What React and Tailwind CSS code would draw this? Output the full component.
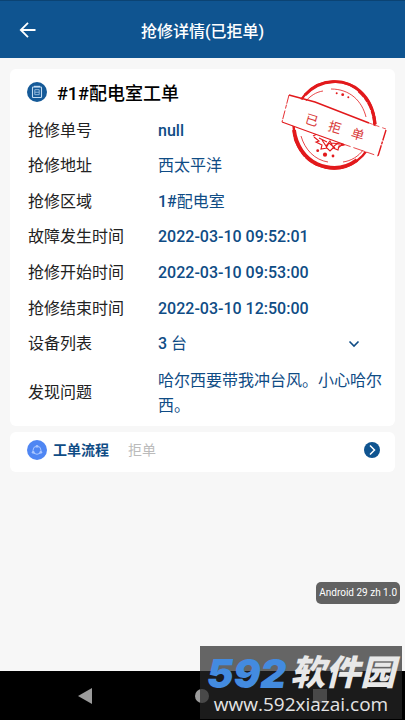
import React from "react";

const details = [
  { label: "抢修单号", value: "null" },
  { label: "抢修地址", unit: "西太平洋" },
  { label: "抢修区域", value: "1#", unit: "配电室" },
  { label: "故障发生时间", value: "2022-03-10 09:52:01" },
  { label: "抢修开始时间", value: "2022-03-10 09:53:00" },
  { label: "抢修结束时间", value: "2022-03-10 12:50:00" },
];

function Header() {
  return (
    <header className="grid h-[58px] grid-cols-[56px_1fr_56px] items-center border-t border-[#0b4373] bg-[#0f5490] text-white">
      <button type="button" aria-label="返回" className="flex h-full items-center pl-[19px]">
        <svg width="18" height="18" viewBox="0 0 18 18" fill="none" stroke="currentColor" strokeWidth="1.8">
          <path d="M16.5 9H2M9 1.8 1.8 9 9 16.2" />
        </svg>
      </button>
      <h1 className="pt-1 text-center text-base font-medium">抢修详情(已拒单)</h1>
    </header>
  );
}

function OrderIcon() {
  return (
    <svg width="20" height="20" viewBox="0 0 20 20" fill="none" className="shrink-0">
      <circle cx="10" cy="10" r="10" fill="#155a98" />
      <rect x="5.5" y="5" width="9" height="10.5" rx="0.8" stroke="#c4dcf2" strokeWidth="1.1" />
      <path d="M7 4.5h6" stroke="#c4dcf2" strokeWidth="1.4" />
      <path d="M7.8 7.7h4.4v5H7.8zM7.8 10.2h4.4" stroke="#9fc3e4" strokeWidth="0.9" />
    </svg>
  );
}

function FlowIcon() {
  return (
    <svg width="20" height="20" viewBox="0 0 20 20" fill="none" className="shrink-0">
      <circle cx="10" cy="10" r="10" fill="#4f86f3" />
      <circle cx="10" cy="10.3" r="4" stroke="#a9c6ff" strokeWidth="1" />
      <circle cx="10" cy="6.3" r="1.4" fill="#a9c6ff" />
      <circle cx="6.2" cy="12.3" r="1.4" fill="#a9c6ff" />
      <circle cx="13.8" cy="12.3" r="1.4" fill="#a9c6ff" />
    </svg>
  );
}

function Stamp() {
  return (
    <svg
      width="106"
      height="94"
      viewBox="0 0 106 94"
      fill="none"
      stroke="#e2191c"
      className="absolute top-[9px] right-2"
    >
      <ellipse cx="53" cy="47" rx="40.5" ry="43.5" strokeWidth="2.4" />
      <path d="M24 17C40 0 64 0 79 13c9 8 14 19 15 33" strokeWidth="2.8" />
      <path d="M78 13c9 8 15 19 16 34" strokeWidth="3.2" strokeDasharray="8 1 5 1" />
      <path d="M13 52c2 16 11 28 23 34 14 6 28 5 40-4" strokeWidth="3.8" />
      <path d="M14 60c5 14 12 22 23 27" strokeWidth="3" strokeDasharray="5 1 9 1" />
      <path d="M24 24c5-6 11-10 18-11M50 11c19 0 31 12 35 28M20 58c4 14 14 24 27 26M62 84c8-1 16-6 20-12" strokeWidth="0.8" />
      <g fill="#e2191c" stroke="none">
        <circle cx="55.7" cy="15.3" r="1" />
        <circle cx="61.7" cy="16.7" r="1.4" />
        <circle cx="67.3" cy="19.3" r="1" />
        <circle cx="36.7" cy="72.7" r="1.4" />
        <circle cx="44" cy="76.7" r="2.1" />
        <circle cx="52" cy="78" r="1.4" />
      </g>
      <path
        d="M33 59l5 4-3 1 6 3-1 4 6-1 3 3 3-3 5 2 1-4 5-1-1-2M32 58l4-2M41 62l4 6 4-5 3 6 5-4M45 70l3-5 6 5M38 60l8 4M50 65l11 1M57 70l6-5"
        strokeWidth="1.1"
      />
      <path d="M8 17 105 52 97 78 1 44z" fill="#fff" stroke="none" />
      <path d="M8 17 34 24 88 45" strokeWidth="1.5" />
      <path d="M88 45 105 51" strokeWidth="0.7" strokeDasharray="4 3" />
      <path d="M105 52 97 78" strokeWidth="1.4" strokeDasharray="11 1 3 1" />
      <path d="M8 17 1 44" strokeWidth="0.9" strokeDasharray="9 1 4 2" />
      <path d="M1 44 34 56 62 66" strokeWidth="1.2" />
      <path d="M62 66 97 78" strokeWidth="0.8" strokeDasharray="8 3 12 2" />
      <g
        transform="rotate(17 54 49)"
        fill="#d93a3a"
        stroke="none"
        fontSize="13"
        textAnchor="middle"
        className="font-['Noto_Sans_CJK_SC',sans-serif]"
      >
        <text x="30" y="54">已</text>
        <text x="54" y="54">拒</text>
        <text x="78" y="54">单</text>
      </g>
    </svg>
  );
}

function DetailCard() {
  return (
    <section className="relative rounded-md bg-white pt-2 pr-3 pb-2 pl-[17px]">
      <Stamp />
      <div className="flex h-9 items-center gap-2.5 pb-1.5">
        <OrderIcon />
        <h2 className="pt-1 text-lg leading-6 font-medium text-black">#1#配电室工单</h2>
      </div>
      <dl className="grid pl-px text-base">
        <div className="grid h-[249px] auto-rows-fr">
          {details.map(({ label, value, unit }) => (
            <div key={label} className="grid grid-cols-[130px_1fr] items-center">
              <dt className="text-[#222]">{label}</dt>
              <dd className="text-[#0f4c85]">
                {value && <span className="font-medium">{value}</span>}
                {unit}
              </dd>
            </div>
          ))}
          <div className="grid grid-cols-[130px_1fr] items-center">
            <dt className="text-[#222]">设备列表</dt>
            <dd className="text-[#0f4c85]">
              <button type="button" className="flex w-full items-center justify-between pr-[23px]">
                <span>
                  <span className="font-medium">3</span> 台
                </span>
                <svg width="12" height="12" viewBox="0 0 12 12" fill="none" stroke="currentColor" strokeWidth="1.6">
                  <path d="M1.5 3.5 6 8l4.5-4.5" />
                </svg>
              </button>
            </dd>
          </div>
        </div>
        <div className="grid grid-cols-[130px_1fr] items-center pt-1.5">
          <dt className="text-[#222]">发现问题</dt>
          <dd className="leading-[25px] text-[#0f4c85]">哈尔西要带我冲台风。小心哈尔西。</dd>
        </div>
      </dl>
    </section>
  );
}

function FlowCard() {
  return (
    <button type="button" className="flex h-10 w-full items-center rounded-md bg-white pr-[15px] pb-1 pl-[17px]">
      <FlowIcon />
      <span className="pl-1.5 text-sm font-bold text-[#0f4c85]">工单流程</span>
      <span className="pl-[19px] text-sm text-[#bbb]">拒单</span>
      <svg width="16" height="16" viewBox="0 0 16 16" fill="none" className="ml-auto">
        <circle cx="8" cy="8" r="8" fill="#0f5490" />
        <path d="M6 3.5 10.5 8 6 12.5" stroke="#fff" strokeWidth="1.5" />
      </svg>
    </button>
  );
}

function Watermark() {
  return (
    <div className="absolute right-[3px] bottom-px flex h-[73px] w-[202px] flex-col items-center bg-[#262626]/70 pt-2.5">
      <div className="flex items-center gap-1 whitespace-nowrap italic">
        <span className="font-['Inter','Liberation_Sans',sans-serif] text-[40px] leading-9 font-black text-[#438be0]">592</span>
        <span className="text-[35px] leading-9 font-black text-[#e8e8e8]">软件园</span>
      </div>
      <div className="font-['Open_Sans','Noto_Sans',sans-serif] text-[19px] leading-6 text-[#e4e4e4]">www.592xiazai.com</div>
    </div>
  );
}

export default function App() {
  return (
    <div className="relative flex min-h-screen flex-col bg-[#f7f7f7] font-['Roboto','Noto_Sans_CJK_SC',sans-serif]">
      <Header />
      <main className="flex flex-1 flex-col gap-1.5 px-2.5 pt-[11px]">
        <DetailCard />
        <FlowCard />
      </main>
      <div className="absolute right-[5px] bottom-[116px] rounded-[5px] bg-[#626262] px-[3px] text-[10px] leading-[22px] text-white">
        Android 29 zh 1.0
      </div>
      <nav className="grid h-[49px] grid-cols-3 items-center justify-items-center bg-black px-[26px] text-[#9b9b9b]">
        <button type="button" aria-label="后退">
          <svg width="16" height="18" viewBox="0 0 16 18" fill="currentColor">
            <path d="M15 1v16L1 9z" />
          </svg>
        </button>
        <button type="button" aria-label="主页" className="h-3.5 w-3.5 rounded-full bg-current" />
        <button type="button" aria-label="最近任务" className="h-3.5 w-3.5 bg-current" />
      </nav>
      <Watermark />
    </div>
  );
}
